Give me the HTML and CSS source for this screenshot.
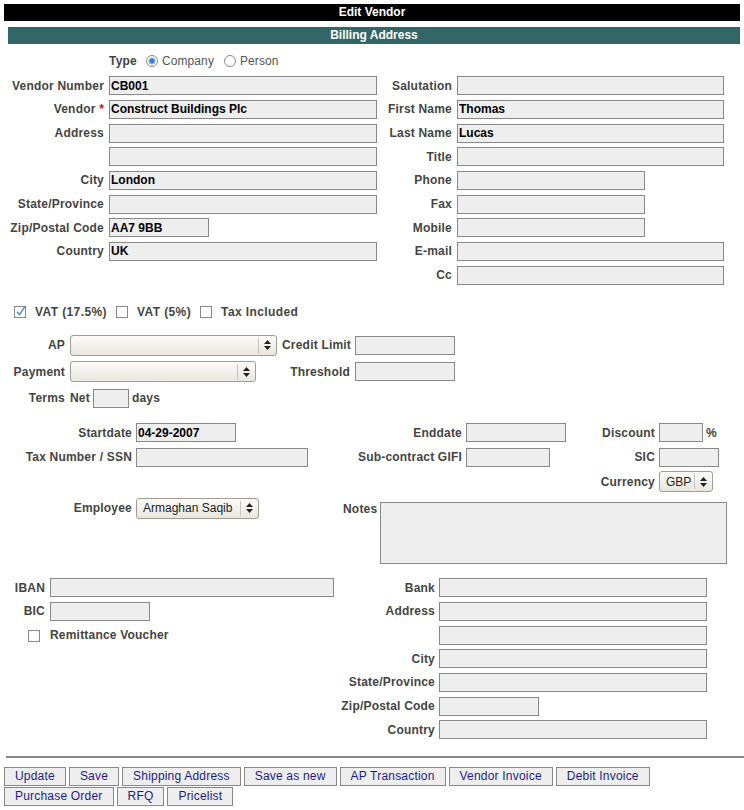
FILE: index.html
```html
<!DOCTYPE html>
<html>
<head>
<meta charset="utf-8">
<title>Edit Vendor</title>
<link rel="stylesheet" href="styles.css">
</head>
<body>
<div class="page">
  <div class="titlebar">Edit Vendor</div>
  <div class="content">
    <div class="sectionbar">Billing Address</div>

    <div class="typerow">
      <span class="lbl">Type</span>
      <span class="opt opt-first">
        <svg class="radio" width="12" height="12" viewBox="0 0 12 12"><circle cx="6" cy="6" r="5.5" fill="#fff" stroke="#8a8784"/><circle cx="6" cy="6" r="3.2" fill="#3b7fd4" stroke="#a9c8ee" stroke-width="1"/></svg>
        <span class="optlbl">Company</span>
      </span>
      <span class="opt">
        <svg class="radio" width="12" height="12" viewBox="0 0 12 12"><circle cx="6" cy="6" r="5.5" fill="#fff" stroke="#8a8784"/></svg>
        <span class="optlbl">Person</span>
      </span>
    </div>

    <div class="address">
      <div class="grid-left">
        <span class="lbl">Vendor Number</span><input class="field" type="text" value="CB001">
        <span class="lbl">Vendor <span class="req">*</span></span><input class="field" type="text" value="Construct Buildings Plc">
        <span class="lbl">Address</span><input class="field" type="text" value="">
        <span class="lbl"></span><input class="field" type="text" value="">
        <span class="lbl">City</span><input class="field" type="text" value="London">
        <span class="lbl">State/Province</span><input class="field" type="text" value="">
        <span class="lbl">Zip/Postal Code</span><input class="field w100" type="text" value="AA7 9BB">
        <span class="lbl">Country</span><input class="field" type="text" value="UK">
      </div>
      <div class="grid-right">
        <span class="lbl">Salutation</span><input class="field" type="text" value="">
        <span class="lbl">First Name</span><input class="field" type="text" value="Thomas">
        <span class="lbl">Last Name</span><input class="field" type="text" value="Lucas">
        <span class="lbl">Title</span><input class="field" type="text" value="">
        <span class="lbl">Phone</span><input class="field w188" type="text" value="">
        <span class="lbl">Fax</span><input class="field w188" type="text" value="">
        <span class="lbl">Mobile</span><input class="field w188" type="text" value="">
        <span class="lbl">E-mail</span><input class="field" type="text" value="">
        <span class="lbl">Cc</span><input class="field" type="text" value="">
      </div>
    </div>

    <div class="taxes">
      <span class="chk">
        <svg width="13" height="13" viewBox="0 0 13 13"><rect x="0.5" y="1.5" width="11" height="11" fill="#fff" stroke="#8a8784"/><path d="M3 6.8 L5.6 9.6 L11.2 1.2" fill="none" stroke="#4a87d6" stroke-width="1.4"/></svg>
        <span class="lbl">VAT (17.5%)</span>
      </span>
      <span class="chk">
        <svg width="13" height="13" viewBox="0 0 13 13"><rect x="0.5" y="1.5" width="11" height="11" fill="#fff" stroke="#8a8784"/></svg>
        <span class="lbl">VAT (5%)</span>
      </span>
      <span class="chk">
        <svg width="13" height="13" viewBox="0 0 13 13"><rect x="0.5" y="1.5" width="11" height="11" fill="#fff" stroke="#8a8784"/></svg>
        <span class="lbl">Tax Included</span>
      </span>
    </div>

    <div class="acct">
      <span class="lbl">AP</span>
      <div class="select sel-ap"><span class="sel-text"></span><span class="sel-btn"><svg width="7" height="10" viewBox="0 0 7 10"><path d="M3.5 0 L7 4 H0 Z M0 6 H7 L3.5 10 Z" fill="#222"/></svg></span></div>
      <span class="lbl">Credit Limit</span>
      <input class="field w100" type="text" value="">

      <span class="lbl">Payment</span>
      <div class="select sel-pay"><span class="sel-text"></span><span class="sel-btn"><svg width="7" height="10" viewBox="0 0 7 10"><path d="M3.5 0 L7 4 H0 Z M0 6 H7 L3.5 10 Z" fill="#222"/></svg></span></div>
      <span class="lbl">Threshold</span>
      <input class="field w100" type="text" value="">

      <span class="lbl">Terms</span>
      <div class="terms"><span class="lbl">Net</span><input class="field w36" type="text" value=""><span class="lbl">days</span></div>
      <span></span><span></span>
    </div>

    <div class="dates">
      <span class="lbl">Startdate</span>
      <div><input class="field w100" type="text" value="04-29-2007"></div>
      <span class="lbl">Enddate</span>
      <div><input class="field w100" type="text" value=""></div>
      <span class="lbl">Discount</span>
      <div class="pct"><input class="field w44" type="text" value=""><span class="lbl">%</span></div>

      <span class="lbl">Tax Number / SSN</span>
      <div><input class="field w172" type="text" value=""></div>
      <span class="lbl">Sub-contract GIFI</span>
      <div><input class="field w84" type="text" value=""></div>
      <span class="lbl">SIC</span>
      <div><input class="field w60" type="text" value=""></div>

      <span></span><span></span><span></span><span></span>
      <span class="lbl">Currency</span>
      <div class="select sel-cur"><span class="sel-text">GBP</span><span class="sel-btn"><svg width="7" height="10" viewBox="0 0 7 10"><path d="M3.5 0 L7 4 H0 Z M0 6 H7 L3.5 10 Z" fill="#222"/></svg></span></div>
    </div>

    <div class="misc">
      <span class="lbl lbl-emp">Employee</span>
      <div class="select sel-emp"><span class="sel-text">Armaghan Saqib</span><span class="sel-btn"><svg width="7" height="10" viewBox="0 0 7 10"><path d="M3.5 0 L7 4 H0 Z M0 6 H7 L3.5 10 Z" fill="#222"/></svg></span></div>
      <span class="lbl lbl-notes">Notes</span>
      <textarea class="notes"></textarea>
    </div>

    <div class="bank">
      <div class="bank-left">
        <span class="lbl">IBAN</span><input class="field" type="text" value="">
        <span class="lbl">BIC</span><input class="field w100" type="text" value="">
        <span class="chkcell"><svg width="13" height="13" viewBox="0 0 13 13"><rect x="0.5" y="1.5" width="11" height="11" fill="#fff" stroke="#8a8784"/></svg></span><span class="lbl lbl-left">Remittance Voucher</span>
      </div>
      <div class="bank-right">
        <span class="lbl">Bank</span><input class="field" type="text" value="">
        <span class="lbl">Address</span><input class="field" type="text" value="">
        <span class="lbl"></span><input class="field" type="text" value="">
        <span class="lbl">City</span><input class="field" type="text" value="">
        <span class="lbl">State/Province</span><input class="field" type="text" value="">
        <span class="lbl">Zip/Postal Code</span><input class="field w100" type="text" value="">
        <span class="lbl">Country</span><input class="field" type="text" value="">
      </div>
    </div>

    <hr class="rule">
  </div>

  <div class="buttons">
    <div class="btnrow">
      <button class="btn">Update</button>
      <button class="btn">Save</button>
      <button class="btn">Shipping Address</button>
      <button class="btn">Save as new</button>
      <button class="btn">AP Transaction</button>
      <button class="btn">Vendor Invoice</button>
      <button class="btn">Debit Invoice</button>
    </div>
    <div class="btnrow">
      <button class="btn">Purchase Order</button>
      <button class="btn">RFQ</button>
      <button class="btn">Pricelist</button>
    </div>
  </div>
</div>
</body>
</html>
```

FILE: styles.css
```css
* { box-sizing: border-box; }

body {
  margin: 0;
  font-family: "Liberation Sans", Arial, sans-serif;
  font-size: 12px;
  color: #444;
  background: #fff;
}

.page { padding: 4px 4px 0 4px; }

.titlebar {
  background: #000;
  color: #fff;
  font-weight: bold;
  text-align: center;
  height: 17px;
  line-height: 17px;
}

.content { margin: 6px 0 0 4px; }

.sectionbar {
  background: #336666;
  color: #fff;
  font-weight: bold;
  text-align: center;
  height: 17px;
  line-height: 17px;
}

.lbl {
  font-weight: bold;
  color: #444;
  text-align: right;
  white-space: nowrap;
  line-height: 14px;
  letter-spacing: 0.2px;
}

.req { color: #e00; }

.field {
  display: block;
  height: 19px;
  width: 100%;
  margin: 0;
  border: 1px solid #888;
  background: #eee;
  font: bold 12px "Liberation Sans", Arial, sans-serif;
  color: #000;
  padding: 0 1px;
  outline: none;
}
.w36 { width: 36px; }
.w44 { width: 44px; }
.w60 { width: 60px; }
.w84 { width: 84px; }
.w100 { width: 100px; }
.w172 { width: 172px; }
.w188 { width: 188px; }

/* type row */
.typerow {
  display: flex;
  align-items: center;
  height: 30px;
  padding: 4px 0 0 101px;
}
.opt {
  display: inline-flex;
  align-items: center;
  gap: 4px;
  margin-left: 10px;
}
.opt-first { margin-left: 9px; }
.optlbl { color: #555; letter-spacing: 0.1px; }
.radio { display: block; }

/* address */
.address { display: flex; gap: 5px; }
.grid-left {
  display: grid;
  grid-template-columns: 96px 268px;
  column-gap: 5px;
  grid-auto-rows: 23.66px;
  align-items: center;
}
.grid-right {
  display: grid;
  grid-template-columns: 70px 267px;
  column-gap: 5px;
  grid-auto-rows: 23.66px;
  align-items: center;
}

/* taxes */
.taxes {
  display: flex;
  align-items: center;
  height: 20px;
  margin-top: 15px;
  padding-left: 6px;
}
.chk {
  display: inline-flex;
  align-items: center;
  gap: 8px;
  margin-right: 9px;
}
.taxes .lbl { letter-spacing: 0.4px; }
.chk svg, .chkcell svg { display: block; }

/* accounts */
.acct {
  display: grid;
  grid-template-columns: 57px 207px 68px 100px;
  column-gap: 5px;
  grid-auto-rows: 26.5px;
  align-items: center;
  margin-top: 10px;
}
.terms { display: flex; align-items: center; gap: 3px; }
.terms .lbl { text-align: left; }

.select {
  display: flex;
  align-items: center;
  height: 21px;
  border: 1px solid #a39d91;
  border-radius: 3px;
  background: linear-gradient(#fcfbf9, #e9e6e0);
}
.sel-text {
  flex: 1;
  padding-left: 6px;
  color: #222;
  white-space: nowrap;
  overflow: hidden;
}
.sel-btn {
  width: 18px;
  height: 15px;
  border-left: 1px solid #c9c3b8;
  display: flex;
  align-items: center;
  justify-content: center;
}
.sel-ap { width: 207px; }
.sel-pay { width: 186px; }
.sel-cur { width: 54px; }
.sel-emp { width: 123px; }

/* dates */
.dates {
  display: grid;
  grid-template-columns: 124px 176px 146px 104px 81px auto;
  column-gap: 4px;
  grid-auto-rows: 24.5px;
  align-items: center;
  margin-top: 9px;
}
.pct { display: flex; align-items: center; gap: 3px; }
.pct .lbl { text-align: left; }

/* employee / notes */
.misc {
  display: grid;
  grid-template-columns: 124px 203px 33px 347px;
  column-gap: 4px;
  align-items: start;
  margin-top: 4px;
}
.lbl-emp { line-height: 16px; margin-top: 2px; }
.lbl-notes { line-height: 16px; margin-top: 3px; }
.notes {
  display: block;
  width: 347px;
  height: 62px;
  margin: 4px 0 0 0;
  border: 1px solid #888;
  background: #eee;
  resize: none;
  font: 12px "Liberation Sans", Arial, sans-serif;
}

/* bank */
.bank { display: flex; gap: 5px; margin-top: 12px; }
.bank-left {
  display: grid;
  grid-template-columns: 37px 284px;
  column-gap: 5px;
  grid-auto-rows: 23.66px;
  align-items: center;
  align-content: start;
}
.bank-right {
  display: grid;
  grid-template-columns: 96px 268px;
  column-gap: 4px;
  grid-auto-rows: 23.66px;
  align-items: center;
}
.chkcell { justify-self: end; margin-right: 4px; }
.lbl-left { text-align: left; }

.rule {
  border: 0;
  height: 2px;
  background: #888;
  margin: 14px -4px 0 -2px;
}

/* buttons */
.buttons {
  display: flex;
  flex-direction: column;
  gap: 1px;
  margin-top: 9px;
}
.btnrow { display: flex; gap: 3px; }
.btn {
  height: 19px;
  margin: 0;
  padding: 0 10px;
  border: 1px solid #888;
  background: #eee;
  color: #1c1c8e;
  font: 12px "Liberation Sans", Arial, sans-serif;
  letter-spacing: 0.2px;
  line-height: 17px;
  border-radius: 0;
}
```
